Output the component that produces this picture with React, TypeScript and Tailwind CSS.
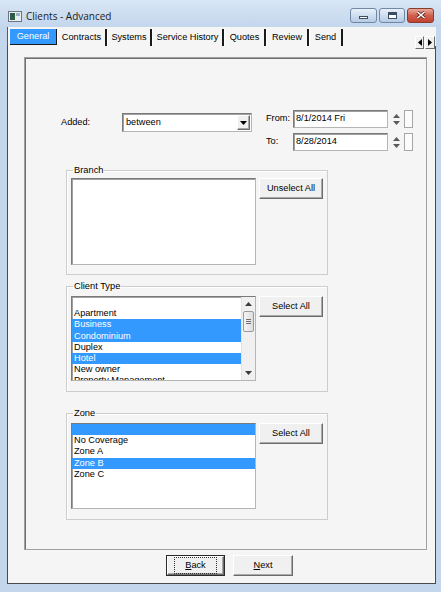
import type { ReactNode } from "react";

const clientTypes = [
  { name: "", sel: false },
  { name: "Apartment", sel: false },
  { name: "Business", sel: true },
  { name: "Condominium", sel: true },
  { name: "Duplex", sel: false },
  { name: "Hotel", sel: true },
  { name: "New owner", sel: false },
  { name: "Property Management", sel: false },
];

const zones = [
  { name: "", sel: true },
  { name: "No Coverage", sel: false },
  { name: "Zone A", sel: false },
  { name: "Zone B", sel: true },
  { name: "Zone C", sel: false },
];

const tabs = [
  { name: "Contracts", w: "w-[50px]" },
  { name: "Systems", w: "w-[45px]" },
  { name: "Service History", w: "w-[72px]" },
  { name: "Quotes", w: "w-[42px]" },
  { name: "Review", w: "w-[43px]" },
  { name: "Send", w: "w-[34px]" },
];

function Tri({ dir, className }: { dir: "up" | "down" | "left" | "right"; className?: string }) {
  const pts = {
    up: "0,4 3.5,0 7,4",
    down: "0,0 7,0 3.5,4",
    left: "4,0 4,7 0,3.5",
    right: "0,0 0,7 4,3.5",
  }[dir];
  const vb = dir === "up" || dir === "down" ? "0 0 7 4" : "0 0 4 7";
  const size = dir === "up" || dir === "down" ? "w-[7px] h-[4px]" : "w-[4px] h-[7px]";
  return (
    <svg viewBox={vb} className={`${size} ${className ?? ""}`}>
      <polygon points={pts} fill="currentColor" />
    </svg>
  );
}

function Button({ children, className }: { children: ReactNode; className?: string }) {
  return (
    <div
      className={`flex items-center justify-center bg-[#f0f0f0] border border-t-white border-l-white border-r-[#6b6b6b] border-b-[#6b6b6b] shadow-[inset_-1px_-1px_0_#a9a9a9] ${className ?? ""}`}
    >
      {children}
    </div>
  );
}

function Row({ name, sel }: { name: string; sel: boolean }) {
  return (
    <div
      className={`h-[11.2px] leading-[11.2px] pl-[2px] whitespace-nowrap shrink-0 ${
        sel ? "bg-[#3399ff] text-white" : ""
      }`}
    >
      {name}
    </div>
  );
}

function Group({
  title,
  className,
  children,
}: {
  title: string;
  className: string;
  children: ReactNode;
}) {
  return (
    <fieldset
      className={`ml-[41px] w-[262px] border border-[#cdcdcd] shadow-[inset_1px_1px_0_#ffffff] ${className}`}
    >
      <legend className="ml-[6px] px-[1px] leading-[12px] text-[9.3px]">{title}</legend>
      {children}
    </fieldset>
  );
}

const sunken =
  "bg-white border border-t-[#7a7a7a] border-l-[#7a7a7a] border-r-[#b5b5b5] border-b-[#b5b5b5] shadow-[inset_1px_1px_0_#a0a0a0]";

export default function App() {
  return (
    <div className="w-[441px] h-[592px] flex flex-col bg-[#c3d6ec] font-['Liberation_Sans',Arial,sans-serif] text-[9.2px] text-black select-none overflow-hidden">
      {/* title bar */}
      <div className="h-[27px] shrink-0 flex items-center pt-[6px] bg-gradient-to-b from-[#d8e6f5] to-[#c3d6ec]">
        <svg viewBox="0 0 14 11" className="ml-[8px] w-[14px] h-[11px]">
          <rect x="0.5" y="0.5" width="13" height="10" fill="#e9eef2" stroke="#6b7480" />
          <rect x="2" y="2" width="5" height="7" fill="#2f5a48" />
          <rect x="8" y="2" width="4" height="3" fill="#9fb0bd" />
        </svg>
        <span className="ml-[4px] font-['Open_Sans',sans-serif] text-[10px] text-[#1b1b1b]">
          Clients - Advanced
        </span>
        <div className="ml-auto mr-[7px] flex gap-[2px] -mt-[3px]">
          <div className="w-[27px] h-[15px] rounded-[3px] border border-[#7187a6] bg-gradient-to-b from-[#e8f0f9] to-[#b7cbe4] flex items-end justify-center pb-[3px]">
            <div className="w-[9px] h-[3px] bg-white border border-[#3b4c63]" />
          </div>
          <div className="w-[26px] h-[15px] rounded-[3px] border border-[#7187a6] bg-gradient-to-b from-[#e8f0f9] to-[#b7cbe4] flex items-center justify-center">
            <div className="w-[9px] h-[7px] bg-white border border-[#3b4c63] shadow-[inset_0_2px_0_#3b4c63]" />
          </div>
          <div className="w-[27px] h-[15px] rounded-[3px] border border-[#8b3a2e] bg-gradient-to-b from-[#e8a99c] via-[#d0604e] to-[#c2432f] flex items-center justify-center">
            <svg viewBox="0 0 10 8" className="w-[10px] h-[8px]">
              <path d="M1.5 1 L8.5 7 M8.5 1 L1.5 7" stroke="#5a2018" strokeWidth="3" />
              <path d="M1.5 1 L8.5 7 M8.5 1 L1.5 7" stroke="#ffffff" strokeWidth="1.6" />
            </svg>
          </div>
        </div>
      </div>

      <div className="flex-1 flex flex-col pl-[7px] pr-[5px] pb-[8px]">
        {/* tab strip */}
        <div className="h-[19px] shrink-0 flex items-start pt-[2px] pl-[2px] bg-[#f5f5f5] border-l border-[#5a5a5a]">
          <div className="w-[47px] h-[16px] flex items-center justify-center bg-[#3399ff] text-white border-r border-b border-[#1a1a1a]">
            General
          </div>
          {tabs.map((t) => (
            <div
              key={t.name}
              className={`${t.w} h-[17px] flex items-center justify-center border-l border-white border-r-2 border-r-[#1a1a1a] whitespace-nowrap`}
            >
              {t.name}
            </div>
          ))}
          <div className="ml-auto mr-[1px] mt-[7px] flex gap-[1px] relative z-10">
            <div className="w-[9px] h-[13px] flex items-center justify-center bg-[#f0f0f0] border border-t-white border-l-white border-r-[#6b6b6b] border-b-[#6b6b6b]">
              <Tri dir="left" className="w-[3px] h-[5px]" />
            </div>
            <div className="w-[10px] h-[13px] flex items-center justify-center bg-[#f0f0f0] border border-t-white border-l-white border-r-[#6b6b6b] border-b-[#6b6b6b]">
              <Tri dir="right" className="w-[3px] h-[5px]" />
            </div>
          </div>
        </div>

        {/* tab page */}
        <div className="flex-1 flex flex-col bg-[#f5f5f5] border-l border-r border-b border-[#4a4a4a]">
          <div className="ml-[16px] mt-[11px] w-[403px] h-[493px] shrink-0 flex flex-col pt-[52px] border border-[#a0a0a0] shadow-[inset_1px_1px_0_#6f6f6f]">
            {/* added / dates */}
            <div className="flex items-start">
              <div className="ml-[36px] mt-[3px] flex items-center">
                <span className="w-[61px]">Added:</span>
                <div className={`w-[130px] h-[19px] flex items-center ${sunken}`}>
                  <span className="pl-[3px] flex-1">between</span>
                  <Button className="w-[13px] h-[15px] mr-[1px]">
                    <Tri dir="down" className="w-[6px] h-[3px]" />
                  </Button>
                </div>
              </div>
              <div className="ml-[14px] flex flex-col gap-[5px]">
                {[
                  { label: "From:", value: "8/1/2014 Fri" },
                  { label: "To:", value: "8/28/2014" },
                ].map((r) => (
                  <div key={r.label} className="flex items-center h-[18px]">
                    <span className="w-[27px]">{r.label}</span>
                    <div className={`w-[95px] h-[18px] flex items-center pl-[2px] ${sunken}`}>{r.value}</div>
                    <div className="ml-[3px] w-[10px] h-[18px] flex flex-col items-center justify-center gap-[3px] text-[#5a5a5a]">
                      <Tri dir="up" className="w-[5px] h-[3px]" />
                      <Tri dir="down" className="w-[5px] h-[3px]" />
                    </div>
                    <div className="ml-[3px] w-[9px] h-[18px] bg-[#fbfbfb] border border-[#a6a6a6]" />
                  </div>
                ))}
              </div>
            </div>

            {/* branch */}
            <Group title="Branch" className="mt-[13px] h-[111px]">
              <div className="flex items-start pl-[4px] pt-[2px]">
                <div className={`w-[185px] h-[87px] ${sunken}`} />
                <Button className="ml-[3px] w-[64px] h-[21px]">Unselect All</Button>
              </div>
            </Group>

            {/* client type */}
            <Group title="Client Type" className="mt-[5px] h-[112px]">
              <div className="flex items-start pl-[4px] pt-[4px]">
                <div className={`w-[185px] h-[85px] flex ${sunken}`}>
                  <div className="flex-1 flex flex-col overflow-hidden">
                    {clientTypes.map((c, i) => (
                      <Row key={i} name={c.name} sel={c.sel} />
                    ))}
                  </div>
                  <div className="w-[14px] flex flex-col bg-[#f0f0f0] border-l border-[#e3e3e3]">
                    <div className="h-[14px] flex items-center justify-center text-[#3c3c3c]">
                      <Tri dir="up" className="w-[5px] h-[3px]" />
                    </div>
                    <div className="h-[21px] mx-[1px] rounded-[2px] border border-[#9a9a9a] bg-gradient-to-r from-[#f4f4f4] to-[#dedede] flex flex-col items-center justify-center gap-[1px]">
                      <div className="w-[5px] h-[1px] bg-[#707070]" />
                      <div className="w-[5px] h-[1px] bg-[#707070]" />
                      <div className="w-[5px] h-[1px] bg-[#707070]" />
                    </div>
                    <div className="flex-1" />
                    <div className="h-[14px] flex items-center justify-center text-[#3c3c3c]">
                      <Tri dir="down" className="w-[5px] h-[3px]" />
                    </div>
                  </div>
                </div>
                <Button className="ml-[3px] w-[64px] h-[21px]">Select All</Button>
              </div>
            </Group>

            {/* zone */}
            <Group title="Zone" className="mt-[15px] h-[113px]">
              <div className="flex items-start pl-[4px] pt-[4px]">
                <div className={`w-[185px] h-[86px] flex flex-col overflow-hidden ${sunken}`}>
                  {zones.map((z, i) => (
                    <Row key={i} name={z.name} sel={z.sel} />
                  ))}
                </div>
                <Button className="ml-[3px] w-[64px] h-[21px]">Select All</Button>
              </div>
            </Group>
          </div>

          {/* nav buttons */}
          <div className="flex ml-[158px] mt-[5px] gap-[8px]">
            <div className="w-[59px] h-[21px] border border-[#2a2a2a] flex">
              <Button className="flex-1">
                <span className="px-[10px] py-[1px] outline-1 outline-dotted outline-[#333]">
                  <u>B</u>ack
                </span>
              </Button>
            </div>
            <Button className="w-[60px] h-[21px]">
              <span>
                <u>N</u>ext
              </span>
            </Button>
          </div>
        </div>
      </div>
    </div>
  );
}
